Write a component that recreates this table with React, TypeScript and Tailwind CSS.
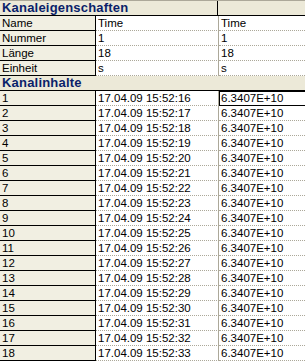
import React from 'react';

const props = [
    { label: 'Name', a: 'Time', b: 'Time' },
    { label: 'Nummer', a: '1', b: '1' },
    { label: 'Länge', a: '18', b: '18' },
    { label: 'Einheit', a: 's', b: 's' },
];

const rows = Array.from({ length: 18 }, (_, i) => ({
    n: String(i + 1),
    time: `17.04.09 15:52:${String(16 + i).padStart(2, '0')}`,
    value: '6.3407E+10',
}));

const Header = ({ title, divider }: { title: string; divider?: boolean }) => (
    <div className="flex h-[15px] bg-[#ece9d8] border-b border-black">
        <div className={`w-[218px] shrink-0 pl-[2px] ${divider ? 'border-r border-black' : ''}`}>
            <span className="block text-[13px] leading-[14px] font-bold text-[#0a1f6a] tracking-[0.2px] whitespace-nowrap">
                {title}
            </span>
        </div>
        <div className="flex-1" />
    </div>
);

const Row = ({ label, a, b, selected }: { label: string; a: string; b: string; selected?: boolean }) => (
    <div className="flex h-[15px] text-[11.5px] leading-[14px] text-black">
        <div className="w-[96px] shrink-0 bg-[#f1efe2] border-r border-b border-black pl-[2px] whitespace-nowrap">
            {label}
        </div>
        <div className="w-[123px] shrink-0 bg-white border-r border-r-[#aca899] border-b border-b-[#aca899] border-dotted [border-right-style:solid] pl-[2px] whitespace-nowrap">
            {a}
        </div>
        <div
            className={`w-[110px] shrink-0 bg-white border-b border-dotted border-[#aca899] pl-[2px] whitespace-nowrap ${
                selected ? 'outline outline-1 outline-black -outline-offset-1' : ''
            }`}
        >
            {b}
        </div>
    </div>
);

export default function App() {
    return (
        <div
            className="w-[305px] h-[362px] overflow-hidden bg-white border-t border-[#aca899]"
            style={{ fontFamily: '"Liberation Sans", Arial, sans-serif' }}
        >
            {/* Kanaleigenschaften */}
            <Header title="Kanaleigenschaften" divider />
            {props.map((p) => (
                <Row key={p.label} label={p.label} a={p.a} b={p.b} />
            ))}

            {/* Kanalinhalte */}
            <Header title="Kanalinhalte" />
            {rows.map((r, i) => (
                <Row key={r.n} label={r.n} a={r.time} b={r.value} selected={i === 0} />
            ))}
        </div>
    );
}
